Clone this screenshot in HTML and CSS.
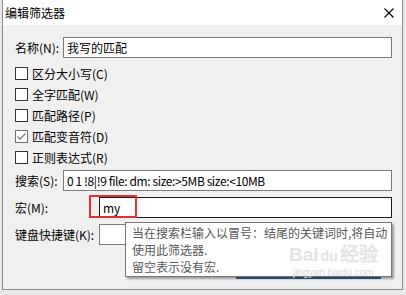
FILE: index.html
```html
<!DOCTYPE html>
<html lang="zh-CN">
<head>
  <meta charset="UTF-8" />
  <title>编辑筛选器</title>
  <link rel="stylesheet" href="styles.css">
</head>
<body>
  <div class="dialog">
    <div class="titlebar">
      <span class="title">编辑筛选器</span>
      <svg class="close" width="10" height="10" viewBox="0 0 10 10">
        <path d="M0.5 0.5 L9.5 9.5 M9.5 0.5 L0.5 9.5" stroke="#000" stroke-width="1.1" fill="none" />
      </svg>
    </div>

    <div class="content">
      <div class="row">
        <label class="lbl">名称(N):</label>
        <input class="field" type="text" value="我写的匹配">
      </div>

      <div class="checks">
        <div class="check"><span class="box"></span>区分大小写(C)</div>
        <div class="check"><span class="box"></span>全字匹配(W)</div>
        <div class="check"><span class="box"></span>匹配路径(P)</div>
        <div class="check"><span class="box checked">
          <svg width="11" height="11" viewBox="0 0 11 11"><path d="M1.5 5.5 L4 8 L9.5 2.5" stroke="#7a7a7a" stroke-width="1.3" fill="none" /></svg>
        </span>匹配变音符(D)</div>
        <div class="check"><span class="box"></span>正则表达式(R)</div>
      </div>

      <div class="row search">
        <label class="lbl">搜索(S):</label>
        <input class="field tight" type="text" value="0 1 !8|!9 file: dm: size:>5MB size:<10MB">
      </div>

      <div class="row macro">
        <label class="lbl wide">宏(M):</label>
        <input class="field focus" type="text" value="my">
        <span class="mark"></span>
      </div>

      <div class="row">
        <label class="lbl wide">键盘快捷键(K):</label>
        <input class="field" type="text" value="">
      </div>
    </div>

    <div class="btnline"></div>

    <div class="tooltip">
      当在搜索栏输入以冒号：结尾的关键词时,将自动<br>
      使用此筛选器.<br>
      留空表示没有宏.
    </div>

    <div class="watermark">
      <span class="wm-logo">Bai<b>du</b>经验</span>
      <span class="wm-url">jingyan.baidu.com</span>
    </div>
  </div>
</body>
</html>
```

FILE: styles.css
```css
* {
  margin: 0;
  padding: 0;
  box-sizing: border-box;
}
body {
  background: #e8e8e8;
  font-family: "Noto Sans CJK SC", "Noto Sans", sans-serif;
  font-size: 12px;
  color: #000;
}
.dialog {
  position: relative;
  margin-left: 2px;
  width: 401px;
  height: 290px;
  border: 1px solid #8c8c8c;
  border-top: none;
  background: #f0f0f0;
  overflow: hidden;
}
.titlebar {
  height: 25px;
  background: #fff;
  display: flex;
  align-items: center;
  justify-content: space-between;
  padding: 0 8px 0 2px;
}
.title {
  font-size: 12px;
  line-height: 25px;
}
.close {
  display: block;
}
.content {
  padding: 12px 10px 0 12px;
}
.row {
  display: flex;
  align-items: center;
  height: 21px;
  position: relative;
}
.lbl {
  width: 48px;
  flex: none;
  line-height: 21px;
}
.lbl.wide {
  width: 84px;
}
.field {
  flex: 1;
  height: 21px;
  border: 1px solid #7a7a7a;
  background: #fff;
  padding: 0 3px;
  font-family: inherit;
  font-size: 12px;
  color: #000;
  outline: none;
}
.field.tight {
  letter-spacing: -0.4px;
}
.field.focus {
  border-color: #1a1a1a;
}
.checks {
  margin-top: 5px;
}
.check {
  display: flex;
  align-items: center;
  height: 21px;
  gap: 4px;
}
.box {
  width: 13px;
  height: 13px;
  border: 1px solid #333;
  background: #fff;
  display: flex;
  align-items: center;
  justify-content: center;
}
.box.checked {
  border-color: #6d6d6d;
}
.search {
  margin-top: 2px;
}
.macro {
  margin-top: 6px;
}
.macro + .row {
  margin-top: 6px;
}
.mark {
  position: absolute;
  left: 74px;
  top: -2px;
  width: 48px;
  height: 23px;
  border: 2px solid #e5312f;
}
.btnline {
  position: absolute;
  left: 233px;
  top: 277px;
  width: 145px;
  height: 2px;
  background: #2d6aa8;
}
.tooltip {
  position: absolute;
  left: 122px;
  top: 222px;
  width: 267px;
  height: 55px;
  background: #fff;
  border: 1px solid #767676;
  box-shadow: 2px 2px 2px rgba(0, 0, 0, 0.35);
  padding: 1px 0 0 6px;
  line-height: 17px;
  color: #575757;
  white-space: nowrap;
}
.watermark {
  position: absolute;
  left: 286px;
  top: 244px;
  display: flex;
  flex-direction: column;
  align-items: center;
  color: #e4e4e4;
  pointer-events: none;
}
.wm-logo {
  font-family: "Liberation Sans", sans-serif;
  font-size: 19px;
  font-weight: bold;
  line-height: 22px;
}
.wm-logo b {
  font-size: 14px;
  margin: 0 2px;
}
.wm-url {
  font-family: "Liberation Sans", sans-serif;
  font-size: 10px;
  line-height: 12px;
  color: #d8d8d8;
}
```
